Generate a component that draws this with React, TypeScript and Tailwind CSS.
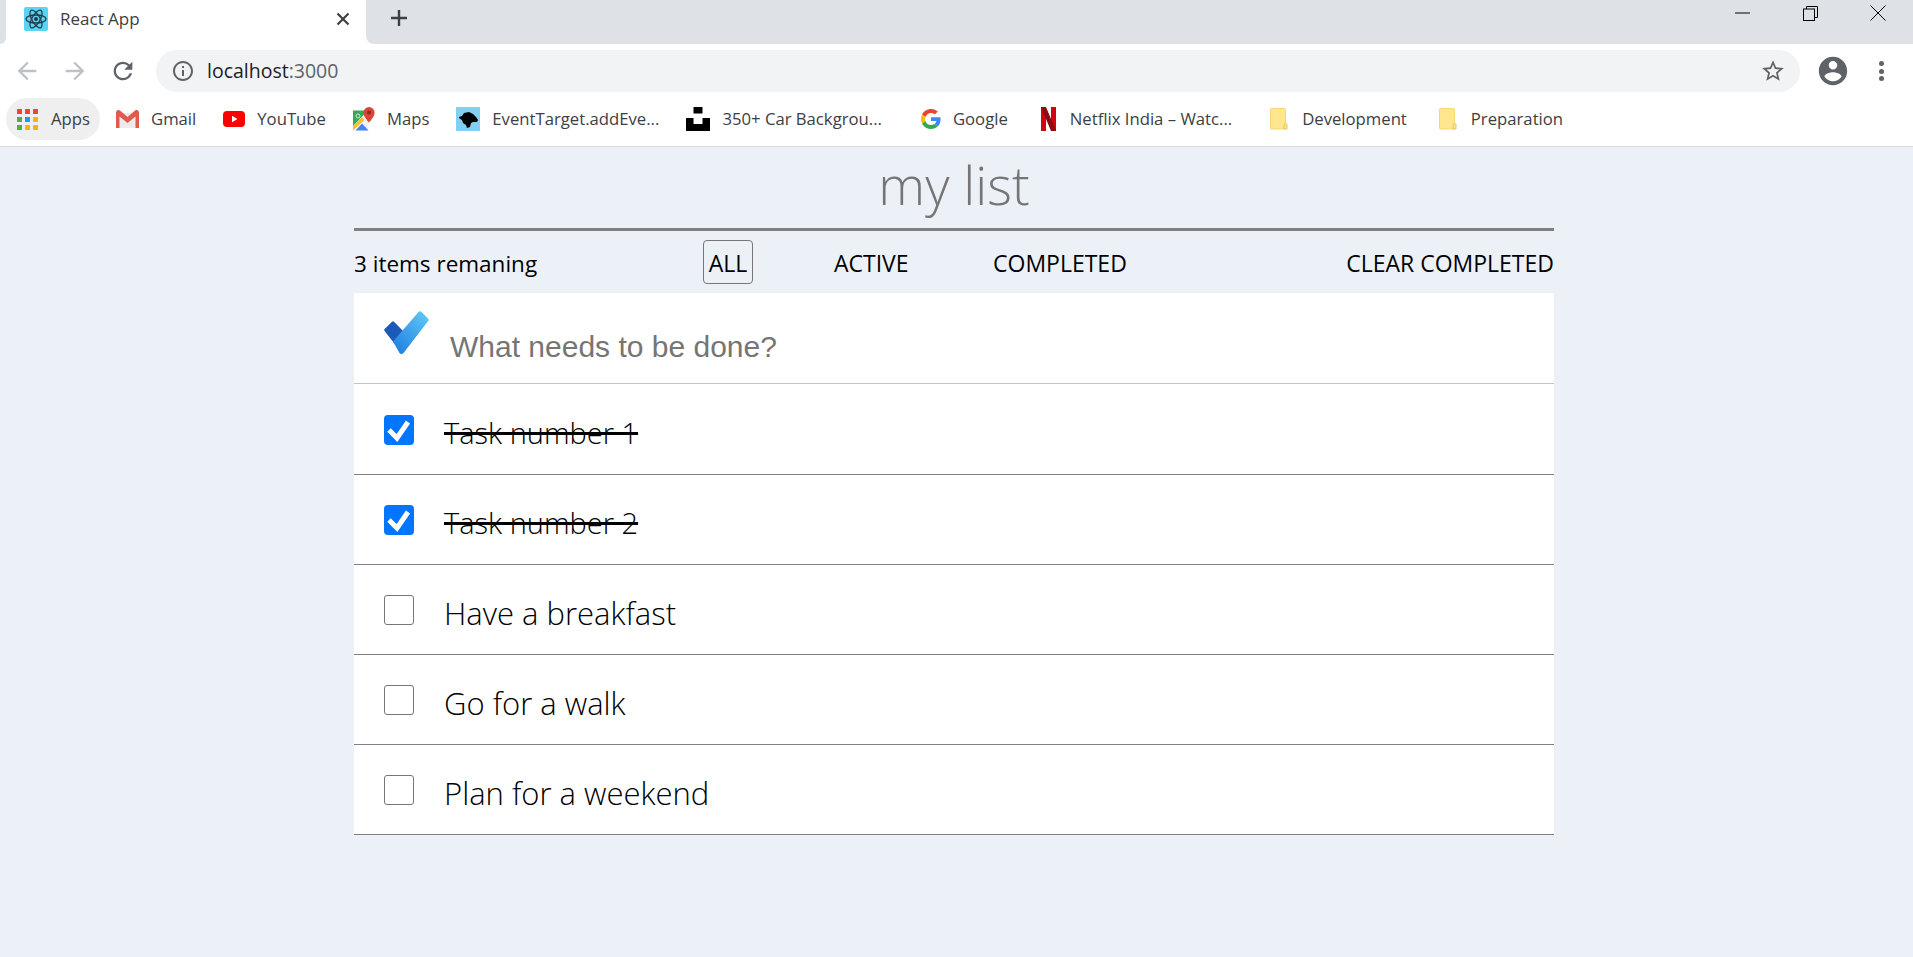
import React from 'react';

const uiFont = "font-['Open_Sans','Noto_Sans',sans-serif]";

function ReactFavicon() {
  return (
    <svg width="24" height="24" viewBox="0 0 24 24" className="shrink-0">
      <rect width="24" height="24" rx="2" fill="#5cd3f5" />
      <g fill="none" stroke="#1f3b47" strokeWidth="1.3">
        <ellipse cx="12" cy="12" rx="10" ry="4" />
        <ellipse cx="12" cy="12" rx="10" ry="4" transform="rotate(60 12 12)" />
        <ellipse cx="12" cy="12" rx="10" ry="4" transform="rotate(120 12 12)" />
      </g>
      <circle cx="12" cy="12" r="2" fill="#1f3b47" />
    </svg>
  );
}

function MaterialIcon({ d, size = 24, color = '#5f6368' }: { d: string; size?: number; color?: string }) {
  return (
    <svg width={size} height={size} viewBox="0 0 24 24" fill={color} className="shrink-0">
      <path d={d} />
    </svg>
  );
}

function AppsIcon() {
  const colors = ['#f44336', '#f44336', '#f44336', '#4caf50', '#2196f3', '#ffb300', '#4caf50', '#ffb300', '#ffb300'];
  return (
    <div className="grid grid-cols-3 gap-[3px] w-[21px] shrink-0">
      {colors.map((c, i) => (
        <svg key={i} width="5" height="5" viewBox="0 0 5 5">
          <rect width="5" height="5" fill={c} />
        </svg>
      ))}
    </div>
  );
}

function GmailIcon() {
  return (
    <svg width="23" height="18" viewBox="0 0 23 18" className="shrink-0">
      <path d="M3 3h17v15H3z" fill="#ececec" />
      <path d="M0 2.500A2.500 2.500 0 0 1 4 .500L11.500 7 19 .500a2.500 2.500 0 0 1 4 2V18h-3.500V6.500l-8 6.500-8-6.500V18H0z" fill="#e25a4f" />
    </svg>
  );
}

function YoutubeIcon() {
  return (
    <svg width="22" height="16" viewBox="0 0 22 16" className="shrink-0">
      <rect width="22" height="16" rx="4" fill="#ff0000" />
      <path d="M9 4.800v6.400L14.400 8z" fill="#fff" />
    </svg>
  );
}

function MapsIcon() {
  return (
    <svg width="22" height="24" viewBox="0 0 22 24" className="shrink-0">
      <path d="M0 3.500h15v20H0z" fill="#f2f2f2" />
      <path d="M0 3.500h15L0 19z" fill="#35a85a" />
      <circle cx="5" cy="9" r="2" fill="none" stroke="#cfe8d6" strokeWidth="1" />
      <path d="M0 19L9 10l2.500 3L0 23.500z" fill="#fbc02d" />
      <path d="M2.500 23.500L9 16.500l6.500 7z" fill="#4285f4" />
      <path d="M16 0a5.600 5.600 0 0 0-5.600 5.600C10.400 10 16 15.500 16 15.500s5.600-5.500 5.600-9.900A5.600 5.600 0 0 0 16 0z" fill="#db4437" />
      <circle cx="16" cy="5.600" r="2" fill="#8f2a20" />
    </svg>
  );
}

function DogIcon() {
  return (
    <svg width="24" height="24" viewBox="0 0 24 24" className="shrink-0">
      <rect width="24" height="24" fill="#83cff2" />
      <path d="M3 10l3-1 2-3 5-1 4 2 3 3 2 3-1 2-4 0-2 1-1 4-3 1-1-3-3-2-1-3-3-2z" fill="#000" />
    </svg>
  );
}

function UnsplashIcon() {
  return (
    <svg width="24" height="24" viewBox="0 0 24 24" className="shrink-0">
      <path d="M7.500 0h9v6.500h-9z" fill="#000" />
      <path d="M0 11h7.500v6h9v-6H24v13H0z" fill="#000" />
    </svg>
  );
}

function GoogleIcon() {
  return (
    <svg width="20" height="20" viewBox="0 0 48 48" className="shrink-0">
      <path fill="#EA4335" d="M24 9.500c3.540 0 6.710 1.220 9.210 3.600l6.850-6.850C35.900 2.380 30.470 0 24 0 14.620 0 6.510 5.380 2.560 13.220l7.980 6.190C12.430 13.720 17.740 9.500 24 9.500z" />
      <path fill="#4285F4" d="M46.980 24.550c0-1.570-.15-3.090-.38-4.550H24v9.020h12.940c-.58 2.960-2.260 5.480-4.780 7.180l7.730 6c4.510-4.180 7.090-10.360 7.090-17.650z" />
      <path fill="#FBBC05" d="M10.530 28.590c-.48-1.450-.76-2.990-.76-4.590s.27-3.140.76-4.590l-7.980-6.190C.92 16.460 0 20.120 0 24c0 3.880.92 7.540 2.560 10.780l7.970-6.190z" />
      <path fill="#34A853" d="M24 48c6.480 0 11.930-2.130 15.890-5.810l-7.730-6c-2.150 1.450-4.920 2.300-8.160 2.300-6.260 0-11.570-4.220-13.470-9.910l-7.980 6.190C6.510 42.620 14.620 48 24 48z" />
    </svg>
  );
}

function NetflixIcon() {
  return (
    <svg width="15" height="24" viewBox="0 0 15 24" className="shrink-0">
      <path d="M0 0h5v24l-5 0z" fill="#d00510" />
      <path d="M10 0h5v24h-5z" fill="#d00510" />
      <path d="M0 0h5l10 24h-5z" fill="#8f0a10" />
    </svg>
  );
}

function FolderIcon() {
  return (
    <svg width="18" height="22" viewBox="0 0 18 22" className="shrink-0">
      <path d="M1.500 0.500h13a1 1 0 0 1 1 1v19.500h-14a1 1 0 0 1-1-1v-18.500a1 1 0 0 1 1-1z" fill="#ffe68f" stroke="#f7d774" />
      <path d="M14 21v-4a1.500 1.500 0 0 1 3 0v4z" fill="#ffe68f" stroke="#e8c65e" />
    </svg>
  );
}

function TodoLogo() {
  return (
    <svg width="45" height="44" viewBox="0 0 45 44" className="shrink-0">
      <defs>
        <linearGradient id="todoTick" x1="12" y1="40" x2="42" y2="6" gradientUnits="userSpaceOnUse">
          <stop offset="0" stopColor="#2080e0" />
          <stop offset="1" stopColor="#5cc2f5" />
        </linearGradient>
      </defs>
      <path d="M0.600 18L8 10.700a1.500 1.500 0 0 1 2 0L20 21 10 32 0.600 20a1.500 1.500 0 0 1 0-2z" fill="#1b5ab8" />
      <path d="M34.500 1a2 2 0 0 1 3 0l6.500 6.500a2 2 0 0 1 0 2.800L19.500 42a2.500 2.500 0 0 1-4 0L9 30.500z" fill="url(#todoTick)" />
    </svg>
  );
}

function TaskCheckbox({ checked }: { checked: boolean }) {
  if (checked) {
    return (
      <div className="w-[30px] h-[30px] shrink-0 rounded-[4px] bg-[#0075ff] flex items-center justify-center">
        <svg width="24" height="24" viewBox="0 0 24 24" fill="none" stroke="#fff" strokeWidth="5">
          <path d="M2 12l8 8L21 4" />
        </svg>
      </div>
    );
  }
  return <div className="w-[30px] h-[30px] shrink-0 rounded-[3px] bg-white border border-[#767676]" />;
}

const bookmarks = [
  { label: 'Gmail', icon: <GmailIcon />, width: 'w-[23px]', mr: 'mr-[27px]' },
  { label: 'YouTube', icon: <YoutubeIcon />, width: 'w-[22px]', mr: 'mr-[27px]' },
  { label: 'Maps', icon: <MapsIcon />, width: 'w-[22px]', mr: 'mr-[27px]' },
  { label: 'EventTarget.addEve...', icon: <DogIcon />, width: 'w-[24px]', mr: 'mr-[27px]' },
  { label: '350+ Car Backgrou...', icon: <UnsplashIcon />, width: 'w-[24px]', mr: 'mr-[39px]' },
  { label: 'Google', icon: <GoogleIcon />, width: 'w-[20px]', mr: 'mr-[31px]' },
  { label: 'Netflix India – Watc...', icon: <NetflixIcon />, width: 'w-[19px]', mr: 'mr-[36px]' },
  { label: 'Development', icon: <FolderIcon />, width: 'w-[22px]', mr: 'mr-[30px]' },
  { label: 'Preparation', icon: <FolderIcon />, width: 'w-[22px]', mr: '' },
];

const tasks = [
  { text: 'Task number 1', done: true },
  { text: 'Task number 2', done: true },
  { text: 'Have a breakfast', done: false },
  { text: 'Go for a walk', done: false },
  { text: 'Plan for a weekend', done: false },
];

function BrowserChrome() {
  return (
    <header className={`${uiFont} bg-white`}>
      {/* tab strip */}
      <div className="h-[44px] flex items-start">
        <div className="w-[6px] h-[44px] bg-[#dee1e6] rounded-br-[8px]" />
        <div className="w-[360px] h-[44px] flex items-center pl-[18px] pr-[14px] pb-[7px]">
          <ReactFavicon />
          <span className="ml-[12px] text-[17px] text-[#3c4043] whitespace-nowrap">React App</span>
          <svg width="14" height="14" viewBox="0 0 14 14" className="ml-auto mr-[2px]" stroke="#3c4043" strokeWidth="2.200">
            <path d="M1.500 1.500l11 11M12.500 1.500l-11 11" />
          </svg>
        </div>
        <div className="flex-1 h-[44px] bg-[#dee1e6] rounded-bl-[8px] flex items-start">
          <svg width="18" height="18" viewBox="0 0 18 18" className="ml-[24px] mt-[9px]" stroke="#3c4043" strokeWidth="2.400">
            <path d="M9 1v16M1 9h16" />
          </svg>
          <div className="ml-auto flex items-center h-[26px] pr-[1px]">
            <div className="w-[68px] flex justify-center">
              <svg width="15" height="2" viewBox="0 0 15 2"><path d="M0 1h15" stroke="#000" strokeWidth="1" /></svg>
            </div>
            <div className="w-[68px] flex justify-center">
              <svg width="15" height="15" viewBox="0 0 15 15" fill="none" stroke="#000" strokeWidth="1">
                <rect x="0.500" y="3" width="11" height="11.500" />
                <path d="M3.500 3V0.500h11V11.500H11.500" />
              </svg>
            </div>
            <div className="w-[68px] flex justify-center">
              <svg width="16" height="16" viewBox="0 0 16 16" stroke="#000" strokeWidth="1"><path d="M0.500 0.500l15 15M15.500 0.500l-15 15" /></svg>
            </div>
          </div>
        </div>
      </div>
      {/* toolbar */}
      <div className="h-[48px] flex items-center pl-[13px] pt-[6px]">
        <MaterialIcon size={28} color="#bdc1c6" d="M20 11H7.830l5.590-5.590L12 4l-8 8 8 8 1.410-1.410L7.830 13H20v-2z" />
        <div className="w-[20px]" />
        <MaterialIcon size={28} color="#bdc1c6" d="M12 4l-1.410 1.410L16.170 11H4v2h12.170l-5.580 5.590L12 20l8-8z" />
        <div className="w-[20px]" />
        <MaterialIcon size={28} d="M17.650 6.350A7.958 7.958 0 0 0 12 4c-4.420 0-7.990 3.580-7.990 8s3.570 8 7.990 8c3.730 0 6.840-2.550 7.730-6h-2.080A5.990 5.990 0 0 1 12 18c-3.310 0-6-2.690-6-6s2.690-6 6-6c1.660 0 3.140.690 4.220 1.780L13 11h7V4l-2.350 2.350z" />
        <div className="ml-[19px] h-[42px] w-[1644px] rounded-full bg-[#f1f3f4] flex items-center pl-[15px] pr-[14px]">
          <MaterialIcon size={24} d="M11 7h2v2h-2zm0 4h2v6h-2zm1-9C6.480 2 2 6.480 2 12s4.480 10 10 10 10-4.480 10-10S17.520 2 12 2zm0 18c-4.410 0-8-3.590-8-8s3.590-8 8-8 8 3.590 8 8-3.590 8-8 8z" />
          <span className="ml-[12px] text-[19.500px] text-[#202124]">localhost<span className="text-[#5f6368]">:3000</span></span>
          <div className="ml-auto">
            <MaterialIcon size={26} d="M22 9.240l-7.190-.620L12 2 9.190 8.630 2 9.240l5.460 4.730L5.820 21 12 17.270 18.180 21l-1.630-7.030L22 9.240zM12 15.400l-3.760 2.270 1-4.280-3.320-2.880 4.380-.380L12 6.100l1.710 4.040 4.380.380-3.320 2.880 1 4.280L12 15.400z" />
          </div>
        </div>
        <div className="ml-[16px]">
          <MaterialIcon size={34} d="M12 2C6.480 2 2 6.480 2 12s4.480 10 10 10 10-4.480 10-10S17.520 2 12 2zm0 3c1.660 0 3 1.340 3 3s-1.340 3-3 3-3-1.340-3-3 1.340-3 3-3zm0 14.200c-2.500 0-4.710-1.280-6-3.220.030-1.990 4-3.080 6-3.080 1.990 0 5.970 1.090 6 3.080-1.290 1.940-3.500 3.220-6 3.220z" />
        </div>
        <div className="ml-[29px] flex flex-col gap-[2.500px]">
          <div className="w-[5px] h-[5px] rounded-full bg-[#5f6368]" />
          <div className="w-[5px] h-[5px] rounded-full bg-[#5f6368]" />
          <div className="w-[5px] h-[5px] rounded-full bg-[#5f6368]" />
        </div>
      </div>
      {/* bookmarks */}
      <div className="h-[55px] flex items-center pl-[6px] border-b border-[#d7dbe2] text-[16.700px] text-[#3c4043] whitespace-nowrap">
        <div className="h-[42px] w-[94px] rounded-full bg-[#efefef] flex items-center pl-[11px] gap-[13px] mr-[16px]">
          <AppsIcon />
          <span>Apps</span>
        </div>
        {bookmarks.map((b) => (
          <div key={b.label} className={`flex items-center gap-[12px] ${b.mr}`}>
            <div className={`${b.width} flex justify-center`}>{b.icon}</div>
            <span>{b.label}</span>
          </div>
        ))}
      </div>
    </header>
  );
}

export default function App() {
  return (
    <div className="min-h-[957px] bg-[#ecf1f8] flex flex-col">
      <BrowserChrome />
      <main className={`${uiFont} w-[1200px] ml-[354px]`}>
        <h1 className="h-[84px] border-b-[3px] border-[#808080] text-center text-[53px] leading-[76px] font-light text-[#757575]">
          my list
        </h1>
        <div className="h-[62px] flex items-center text-[23px] text-black whitespace-nowrap">
          <span className="w-[349px] text-[22.500px] mt-[3px]">3 items remaning</span>
          <button className="h-[44px] w-[50px] border border-[#767676] rounded-[4px] text-center pt-[2px]">ALL</button>
          <button className="ml-[81px] w-[159px] text-left mt-[3px]">ACTIVE</button>
          <button className="mt-[3px]">COMPLETED</button>
          <button className="ml-auto mt-[3px]">CLEAR COMPLETED</button>
        </div>
        <div className="h-[91px] bg-white border-b border-[#c0bcf8] flex items-start pl-[30px]">
          <div className="mt-[18px]"><TodoLogo /></div>
          <input
            readOnly
            placeholder="What needs to be done?"
            className="ml-[21px] mt-[33px] w-[800px] h-[40px] font-['Liberation_Sans',Arial,sans-serif] text-[30px] outline-none placeholder:text-[#757575]"
          />
        </div>
        <ul className="bg-white pt-[1px]">
          {tasks.map((t) => (
            <li key={t.text} className="h-[90px] border-b border-[#808080] flex items-center pl-[30px] pb-[1px]">
              <div className="mt-[1px]"><TaskCheckbox checked={t.done} /></div>
              <span className={`ml-[30px] mt-[8px] font-light text-black ${t.done ? 'text-[29px] line-through decoration-[3px] decoration-black' : 'text-[31px]'}`}>
                {t.text}
              </span>
            </li>
          ))}
        </ul>
      </main>
    </div>
  );
}
